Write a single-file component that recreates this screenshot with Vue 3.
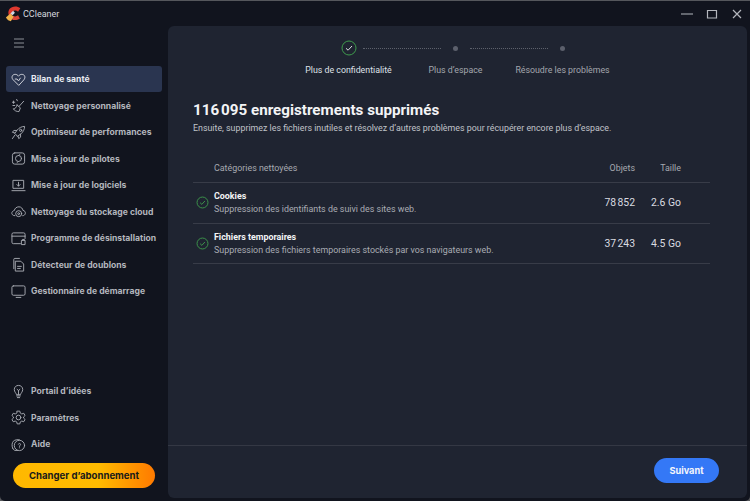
<template>
  <div class="win">
    <header class="titlebar">
      <div class="brand">
        <svg class="logo" viewBox="0 0 20 20" width="18" height="18">
          <path d="M17 3.5 C13.5 .5 7.5 1 5 4.5 C3 7.5 3.5 10.5 5 12.5 L9 10 C8 8 9 6 11 6 C12.5 6 13.5 6.5 14.5 7.5 Z" fill="#e0392f"/>
          <path d="M5 13 C7 17 12 18 16.5 15 L14.5 11.5 C12.5 13 10.5 13.2 9 12 Z" fill="#d9453a"/>
          <path d="M1 14 L6 9.5 L9.5 13 L6.5 18 C4.5 18 2.5 16.5 1 14 Z" fill="#f0b24a"/>
          <path d="M6 9.5 L9 6.5 L11 8.5 L8.5 11.5 Z" fill="#cfd6e4"/>
        </svg>
        <span>CCleaner</span>
      </div>
      <div class="controls">
        <svg viewBox="0 0 12 12" width="12" height="12"><path d="M0 6H12" /></svg>
        <svg viewBox="0 0 12 12" width="12" height="12"><path d="M1.5 2.5H10.5V10H1.5Z" /></svg>
        <svg viewBox="0 0 12 12" width="12" height="12"><path d="M2 2L10 10M10 2L2 10" /></svg>
      </div>
    </header>

    <div class="body">
      <aside class="sidebar">
        <button class="burger" aria-label="Menu">
          <svg viewBox="0 0 12 10" width="12" height="10"><path d="M1 1H11M1 5H11M1 9H11" /></svg>
        </button>
        <nav class="nav">
          <a v-for="item in nav" :key="item.label" class="nav-item" :class="{ active: item.active }">
            <svg class="nav-icon" viewBox="0 0 16 16" width="15" height="15" v-html="item.icon"></svg>
            <span>{{ item.label }}</span>
          </a>
        </nav>
        <nav class="nav nav-bottom">
          <a v-for="item in bottom" :key="item.label" class="nav-item">
            <svg class="nav-icon" viewBox="0 0 16 16" width="15" height="15" v-html="item.icon"></svg>
            <span>{{ item.label }}</span>
          </a>
        </nav>
        <button class="upgrade">Changer d’abonnement</button>
      </aside>

      <main class="main">
        <div class="content">
          <ol class="stepper">
            <li v-for="(s, i) in steps" :key="s" class="step" :class="{ done: i === 0 }">
              <span class="mark">
                <svg v-if="i === 0" viewBox="0 0 16 16" width="16" height="16">
                  <circle cx="8" cy="8" r="7" class="ring" />
                  <path d="M5 8.3L7.1 10.2L11 6" class="tick" />
                </svg>
                <span v-else class="dot"></span>
              </span>
              <span class="step-label">{{ s }}</span>
            </li>
          </ol>

          <h1 class="title">116&#8239;095 enregistrements supprimés</h1>
          <p class="subtitle">Ensuite, supprimez les fichiers inutiles et résolvez d’autres problèmes pour récupérer encore plus d’espace.</p>

          <div class="table">
            <div class="row head">
              <span class="name">Catégories nettoyées</span>
              <span class="num">Objets</span>
              <span class="size">Taille</span>
            </div>
            <div v-for="r in rows" :key="r.title" class="row item">
              <svg class="check" viewBox="0 0 14 14" width="13" height="13">
                <circle cx="7" cy="7" r="5.9" />
                <path d="M4.4 7.2L6.3 9L9.6 5.4" />
              </svg>
              <div class="name">
                <strong>{{ r.title }}</strong>
                <span>{{ r.desc }}</span>
              </div>
              <span class="num">{{ r.count }}</span>
              <span class="size">{{ r.size }}</span>
            </div>
          </div>
        </div>
        <footer class="footer">
          <button class="next">Suivant</button>
        </footer>
      </main>
    </div>
  </div>
</template>

<script setup>
const s = 'fill="none" stroke="currentColor" stroke-width="1" stroke-linecap="round" stroke-linejoin="round"'
const nav = [
  { label: 'Bilan de santé', active: true, icon: `<path ${s} d="M8 14L2 8C0 5.5 1.5 2.5 4.5 2.5C6 2.5 7.2 3.3 8 4.5C8.8 3.3 10 2.5 11.5 2.5C14.5 2.5 16 5.5 14 8Z"/><path ${s} d="M4.5 7.5H6.5L8 9.5L10 6.5"/>` },
  { label: 'Nettoyage personnalisé', icon: `<path ${s} d="M6.5 7.5L10 10.5L8.5 14.5C6 14.5 3.5 13.5 2.5 11.5C4.5 11.5 6 10 6.5 7.5Z"/><path ${s} d="M8.5 9L13.5 3.5"/><path ${s} d="M1.5 4.5H4M2.7 3.3V5.7M6 1.5L6.8 3M2 8H4"/>` },
  { label: 'Optimiseur de performances', icon: `<path ${s} d="M5.5 10.5L4 9L6.5 5.5C8.5 3 11.5 1.5 14.5 1.5C14.5 4.5 13 7.5 10.5 9.5L7 12Z"/><circle ${s} cx="10.3" cy="5.7" r="1.2"/><path ${s} d="M6 5.8H3L1.5 7.8L4 8.5M10.2 10V13L8.2 14.5L7.5 12M4 11L1.5 14.5"/>` },
  { label: 'Mise à jour de pilotes', icon: `<rect ${s} x="1.5" y="2" width="13" height="12" rx="2.5"/><circle ${s} cx="8" cy="8" r="3.2"/><path ${s} d="M8 4.8L9.5 3.8M8 11.2L6.5 12.2"/>` },
  { label: 'Mise à jour de logiciels', icon: `<rect ${s} x="2.5" y="2.5" width="11" height="8.5"/><path ${s} d="M1 13.5H15M8 4.5V8.5M6.3 7L8 8.7L9.7 7"/>` },
  { label: 'Nettoyage du stockage cloud', icon: `<path ${s} d="M4 12.5C1.5 12.5 .5 10.5 1 9C1.5 7.5 3 7 3.5 7C4 4.5 6 3 8.5 3C11 3 12.5 5 12.7 6.8C14.5 7 15.5 8.5 15.3 10C15 11.5 14 12.5 12.5 12.5"/><circle ${s} cx="8.2" cy="10.3" r="3.2"/><circle ${s} cx="8.2" cy="10.3" r="1"/>` },
  { label: 'Programme de désinstallation', icon: `<path ${s} d="M10 13.5H2.5A1.5 1.5 0 0 1 1 12V3.5A1.5 1.5 0 0 1 2.5 2H13.5A1.5 1.5 0 0 1 15 3.5V8"/><path ${s} d="M1 5.5H15"/><rect ${s} x="11.5" y="10" width="3.5" height="4.5"/><path ${s} d="M12.3 9.8V9H14.2V9.8"/>` },
  { label: 'Détecteur de doublons', icon: `<path ${s} d="M5 4.5H10.5L13.5 7.5V15H5Z"/><path ${s} d="M3 12.5V2.5A1 1 0 0 1 4 1.5H9"/><path ${s} d="M7 10H11M7 12.2H10"/>` },
  { label: 'Gestionnaire de démarrage', icon: `<rect ${s} x="1" y="2" width="14" height="10" rx="1.5"/><path ${s} d="M5.5 14.3H10.5"/>` },
]
const bottom = [
  { label: 'Portail d’idées', icon: `<path ${s} d="M5.8 11C5.5 9.5 3.5 8.5 3.5 5.8C3.5 3.3 5.5 1.5 8 1.5C10.5 1.5 12.5 3.3 12.5 5.8C12.5 8.5 10.5 9.5 10.2 11Z"/><path ${s} d="M6 12.7H10M6.8 14.5H9.2M8 11V7L6.5 5.7M8 7L9.5 5.7"/>` },
  { label: 'Paramètres', icon: `<path ${s} d="M6.6 1.2H9.4L9.9 3.3L11.5 4.2L13.6 3.5L15 5.9L13.4 7.4V8.6L15 10.1L13.6 12.5L11.5 11.8L9.9 12.7L9.4 14.8H6.6L6.1 12.7L4.5 11.8L2.4 12.5L1 10.1L2.6 8.6V7.4L1 5.9L2.4 3.5L4.5 4.2L6.1 3.3Z"/><circle ${s} cx="8" cy="8" r="2.5"/>` },
  { label: 'Aide', icon: `<path ${s} d="M2 12.5C.5 10 1 6 2.5 4.5C4 3 7 2.5 9 3"/><circle ${s} cx="9" cy="9" r="5.5"/><path ${s} d="M7.8 7.6C8 6.6 10.2 6.6 10.2 7.9C10.2 8.9 9 8.9 9 10M9 11.5V11.6"/><path ${s} d="M2 12.5L4 14.3H7"/>` },
]
const steps = ['Plus de confidentialité', 'Plus d’espace', 'Résoudre les problèmes']
const rows = [
  { title: 'Cookies', desc: 'Suppression des identifiants de suivi des sites web.', count: '78\u202F852', size: '2.6 Go' },
  { title: 'Fichiers temporaires', desc: 'Suppression des fichiers temporaires stockés par vos navigateurs web.', count: '37\u202F243', size: '4.5 Go' },
]
</script>

<style>
html, body { margin: 0; background: #5a5b5e; }
</style>

<style scoped>
.win {
  width: 750px;
  height: 501px;
  display: flex;
  flex-direction: column;
  background: #11141e;
  color: #fff;
  font-family: Roboto, "Liberation Sans", sans-serif;
  overflow: hidden;
  box-sizing: border-box;
  border-top: 1px solid #55575c;
  border-radius: 0 0 5px 5px;
}
.titlebar {
  height: 25px;
  flex: none;
  display: flex;
  align-items: center;
  justify-content: space-between;
  padding: 0 0 0 5px;
}
.brand { display: flex; align-items: center; gap: 0; font-size: 9px; color: #d6d9de; }
.controls { display: flex; gap: 13px; padding-right: 7px; }
.controls svg { fill: none; stroke: #b4b7bd; stroke-width: 1.2; }
.body { flex: 1; display: flex; min-height: 0; }
.sidebar {
  width: 168px;
  flex: none;
  display: flex;
  flex-direction: column;
  box-sizing: border-box;
  padding: 0 6px 13px;
}
.burger {
  background: none; border: 0; padding: 0; margin: 11px 0 0 7px; width: 12px; height: 12px;
  display: flex; align-items: center;
}
.burger svg { fill: none; stroke: #8d9097; stroke-width: 1; }
.nav { display: flex; flex-direction: column; gap: .5px; margin-top: 17px; }
.nav-bottom { margin-top: auto; }
.nav-item {
  height: 26px;
  display: flex;
  align-items: center;
  gap: 5px;
  padding-left: 5px;
  border-radius: 3px;
  font-family: Inter, Roboto, sans-serif;
  font-size: 8.6px;
  font-weight: 700;
  color: #b3b6bd;
  white-space: nowrap;
}
.nav-item.active { background: #2a3550; color: #e6e9ef; }
.nav-icon { flex: none; color: #a9acb3; }
.active .nav-icon { color: #d5d8df; }
.upgrade {
  margin: 6px 7px 0 7px;
  height: 25px;
  border: 0;
  border-radius: 13px;
  background: linear-gradient(90deg, #ffb800 0%, #ffbb00 60%, #ff7a00 100%);
  color: #1a1a1a;
  font-family: Inter, Roboto, sans-serif;
  font-size: 9.6px;
  font-weight: 700;
  padding: 0;
}
.main {
  flex: 1;
  margin: 0 3px 3px 0;
  background: #1f2431;
  border-radius: 6px;
  display: flex;
  flex-direction: column;
  min-width: 0;
}
.content { flex: 1; padding: 14px 37px 0 25px; min-height: 0; }
.stepper {
  list-style: none;
  margin: 0 0 0 102px;
  padding: 0;
  display: flex;
}
.step {
  position: relative;
  display: flex;
  flex-direction: column;
  align-items: center;
  width: 107px;
  color: #a3a6ad;
  font-size: 8.8px;
}
.step.done { color: #dfe2e8; }
.mark { height: 16px; display: flex; align-items: center; justify-content: center; }
.step:not(:last-child)::after {
  content: "";
  position: absolute;
  left: 68px;
  width: 78px;
  top: 8px;
  border-top: 1px dotted #5d616c;
}
.ring { fill: none; stroke: #3f9a4d; stroke-width: 1; }
.tick { fill: none; stroke: #d8dbe0; stroke-width: 1; }
.dot { width: 5px; height: 5px; border-radius: 50%; background: #5c606c; }
.step-label { margin-top: 9px; white-space: nowrap; line-height: 11px; }
.title {
  margin: 24px 0 0;
  font-size: 15.2px;
  line-height: 20px;
  font-weight: 700;
  color: #f3f4f6;
}
.subtitle { margin: 2px 0 0; font-size: 8.85px; line-height: 12px; color: #c0c3c9; }
.table { margin-top: 19px; }
.row { display: flex; align-items: center; border-bottom: 1px solid #383c48; box-sizing: border-box; }
.row.head { height: 30px; color: #a6a9b0; font-size: 8.9px; }
.row.item { height: 40.5px; }
.row.head .name { margin-left: 21px; }
.name { flex: 1; display: flex; flex-direction: column; min-width: 0; margin-left: 2px; }
.item .name { padding-top: 1px; }
.check { flex: none; margin-left: 3px; margin-right: 3px; fill: none; stroke: #3f9a4d; stroke-width: 1; }
.name strong { font-size: 8.9px; line-height: 13px; color: #f3f4f6; font-weight: 700; }
.name span { font-size: 8.9px; line-height: 13px; color: #a9acb3; }
.num, .size { text-align: right; font-size: 10.4px; color: #d9dbe0; }
.head .num, .head .size { font-size: 8.9px; color: #a6a9b0; }
.num { width: 40px; }
.size { width: 46px; margin-right: 29px; }
.footer {
  height: 53px;
  box-sizing: border-box;
  flex: none;
  border-top: 1px solid #343844;
  display: flex;
  justify-content: flex-end;
  align-items: flex-start;
  padding: 12px 28px 0 0;
}
.next {
  width: 65px;
  height: 25px;
  border: 0;
  border-radius: 13px;
  background: #3478f6;
  color: #f4f6fb;
  font-family: Inter, Roboto, sans-serif;
  font-size: 9.2px;
  font-weight: 700;
  padding: 0;
}
</style>
